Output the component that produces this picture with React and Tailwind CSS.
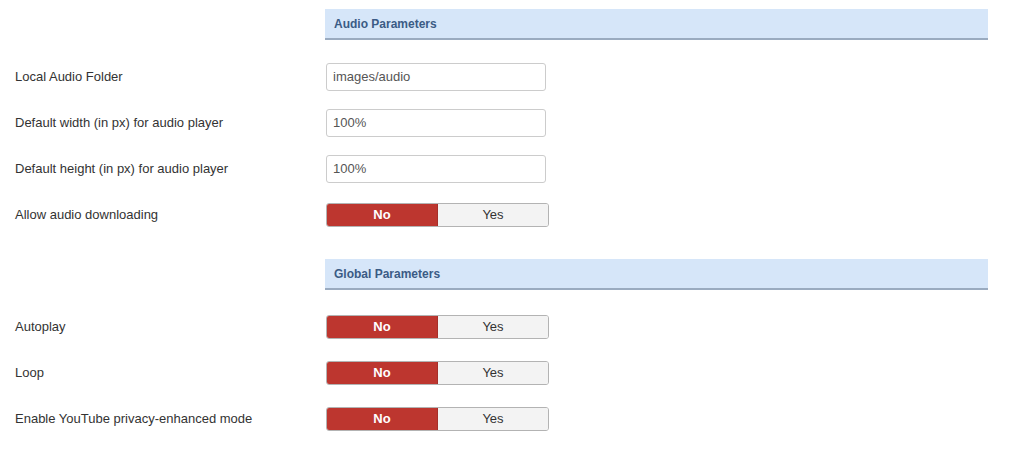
const audioRows = [
  { label: "Local Audio Folder", type: "text", value: "images/audio" },
  { label: "Default width (in px) for audio player", type: "text", value: "100%" },
  { label: "Default height (in px) for audio player", type: "text", value: "100%" },
  { label: "Allow audio downloading", type: "toggle" },
];

const globalRows = [
  { label: "Autoplay", type: "toggle" },
  { label: "Loop", type: "toggle" },
  { label: "Enable YouTube privacy-enhanced mode", type: "toggle" },
];

function SectionHeader({ title }) {
  return (
    <div className="flex">
      <div className="w-[310px] shrink-0" />
      <div className="w-[663px] h-[31px] bg-[#d6e6f9] border-b-2 border-[#9aabc0] flex items-center pl-[9px]">
        <span className="text-[12px] font-bold text-[#3b5b85] whitespace-nowrap">
          {title}
        </span>
      </div>
    </div>
  );
}

function Toggle() {
  return (
    <div className="flex w-[223px] h-[24px] rounded-[3px] overflow-hidden border border-[#b3b3b3] text-[13px]">
      <div className="w-[111px] flex items-center justify-center bg-[#bd362f] text-white font-bold border-r border-[#a52f29]">
        No
      </div>
      <div className="flex-1 flex items-center justify-center bg-[#f3f3f3] text-[#333]">
        Yes
      </div>
    </div>
  );
}

function Row({ row }) {
  return (
    <div className="flex items-center h-[46px]">
      <div className="w-[311px] shrink-0 text-[13px] text-[#333]">{row.label}</div>
      {row.type === "text" ? (
        <div className="w-[220px] h-[28px] border border-[#cccccc] rounded-[3px] bg-white flex items-center px-[6px] text-[13px] text-[#555]">
          {row.value}
        </div>
      ) : (
        <Toggle />
      )}
    </div>
  );
}

export default function App() {
  return (
    <div className="w-[1031px] h-[452px] bg-white pl-[15px] pt-[9px] [font-family:'Liberation_Sans',Arial,sans-serif] overflow-hidden">
      <SectionHeader title="Audio Parameters" />
      <div className="mt-[14px]">
        {audioRows.map((row) => (
          <Row key={row.label} row={row} />
        ))}
      </div>
      <div className="mt-[21px]">
        <SectionHeader title="Global Parameters" />
      </div>
      <div className="mt-[14px]">
        {globalRows.map((row) => (
          <Row key={row.label} row={row} />
        ))}
      </div>
    </div>
  );
}
